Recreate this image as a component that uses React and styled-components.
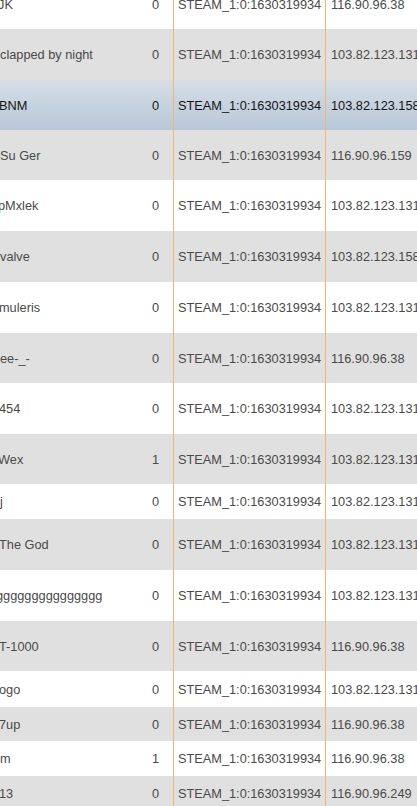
import React from 'react';
import styled, { createGlobalStyle } from 'styled-components';

const GlobalStyle = createGlobalStyle`
  html, body {
    margin: 0;
    padding: 0;
    background: #ffffff;
    overflow: hidden;
  }
`;

const Table = styled.div`
  width: 417px;
  margin-top: -21px;
  font-family: "Liberation Sans", Arial, sans-serif;
  font-size: 12.75px;
  overflow: hidden;
`;

const rowBg = ({ $variant }) => {
  if ($variant === 'active') return 'linear-gradient(to bottom, #d7dee7 0%, #c5d1de 55%, #b9c8d9 100%)';
  if ($variant === 'odd') return '#e0e0e0';
  return '#ffffff';
};

const Row = styled.div`
  display: flex;
  align-items: stretch;
  height: ${({ $h }) => $h}px;
  background: ${rowBg};
  color: ${({ $variant }) => ($variant === 'active' ? '#151515' : '#4a4a4a')};
  white-space: nowrap;
`;

const Cell = styled.div`
  display: flex;
  align-items: center;
  box-sizing: border-box;
  flex: none;
`;

const NameCell = styled(Cell)`
  width: 145px;
  margin-left: ${({ $cut }) => ($cut ? `-${$cut}px` : '0')};
  overflow: hidden;
`;

const NumCell = styled(Cell)`
  width: ${({ $cut }) => 29 + ($cut || 0)}px;
  justify-content: flex-end;
  padding-right: 14px;
  border-right: 1px solid #f7b46a;
`;

const SteamCell = styled(Cell)`
  width: 152px;
  padding-left: 4px;
  border-right: 1px solid #f7b46a;
`;

const IpCell = styled(Cell)`
  flex: 1;
  padding-left: 5px;
  overflow: hidden;
`;

const STEAM = 'STEAM_1:0:1630319934';

const rows = [
  { name: 'JK', cut: 2, n: 0, ip: '116.90.96.38', h: 50 },
  { name: 'clapped by night', cut: 0, n: 0, ip: '103.82.123.131', h: 51 },
  { name: 'BNM', cut: 1, n: 0, ip: '103.82.123.158', h: 50, active: true },
  { name: 'Su Ger', cut: 0, n: 0, ip: '116.90.96.159', h: 50 },
  { name: 'pMxlek', cut: 2, n: 0, ip: '103.82.123.131', h: 51 },
  { name: 'valve', cut: 0, n: 0, ip: '103.82.123.158', h: 51 },
  { name: 'muleris', cut: 1, n: 0, ip: '103.82.123.131', h: 51 },
  { name: 'ee-_-', cut: 0, n: 0, ip: '116.90.96.38', h: 50 },
  { name: '454', cut: 1, n: 0, ip: '103.82.123.131', h: 51 },
  { name: 'Wex', cut: 2, n: 1, ip: '103.82.123.131', h: 50 },
  { name: 'j', cut: 0, n: 0, ip: '103.82.123.131', h: 35 },
  { name: 'The God', cut: 1, n: 0, ip: '103.82.123.131', h: 51 },
  { name: 'ggggggggggggggg', cut: 4, n: 0, ip: '103.82.123.131', h: 51 },
  { name: 'T-1000', cut: 1, n: 0, ip: '116.90.96.38', h: 50 },
  { name: 'ogo', cut: 1, n: 0, ip: '103.82.123.131', h: 36 },
  { name: '7up', cut: 1, n: 0, ip: '116.90.96.38', h: 34 },
  { name: 'm', cut: 0, n: 1, ip: '116.90.96.38', h: 35 },
  { name: '13', cut: 1, n: 0, ip: '116.90.96.249', h: 35 },
];

export default function App() {
  return (
    <>
      <GlobalStyle />
      <Table>
        {rows.map((r, i) => {
          const variant = r.active ? 'active' : i % 2 === 1 ? 'odd' : 'even';
          return (
            <Row key={i} $h={r.h} $variant={variant}>
              <NameCell $cut={r.cut}>{r.name}</NameCell>
              <NumCell $cut={r.cut}>{r.n}</NumCell>
              <SteamCell>{STEAM}</SteamCell>
              <IpCell>{r.ip}</IpCell>
            </Row>
          );
        })}
      </Table>
    </>
  );
}
